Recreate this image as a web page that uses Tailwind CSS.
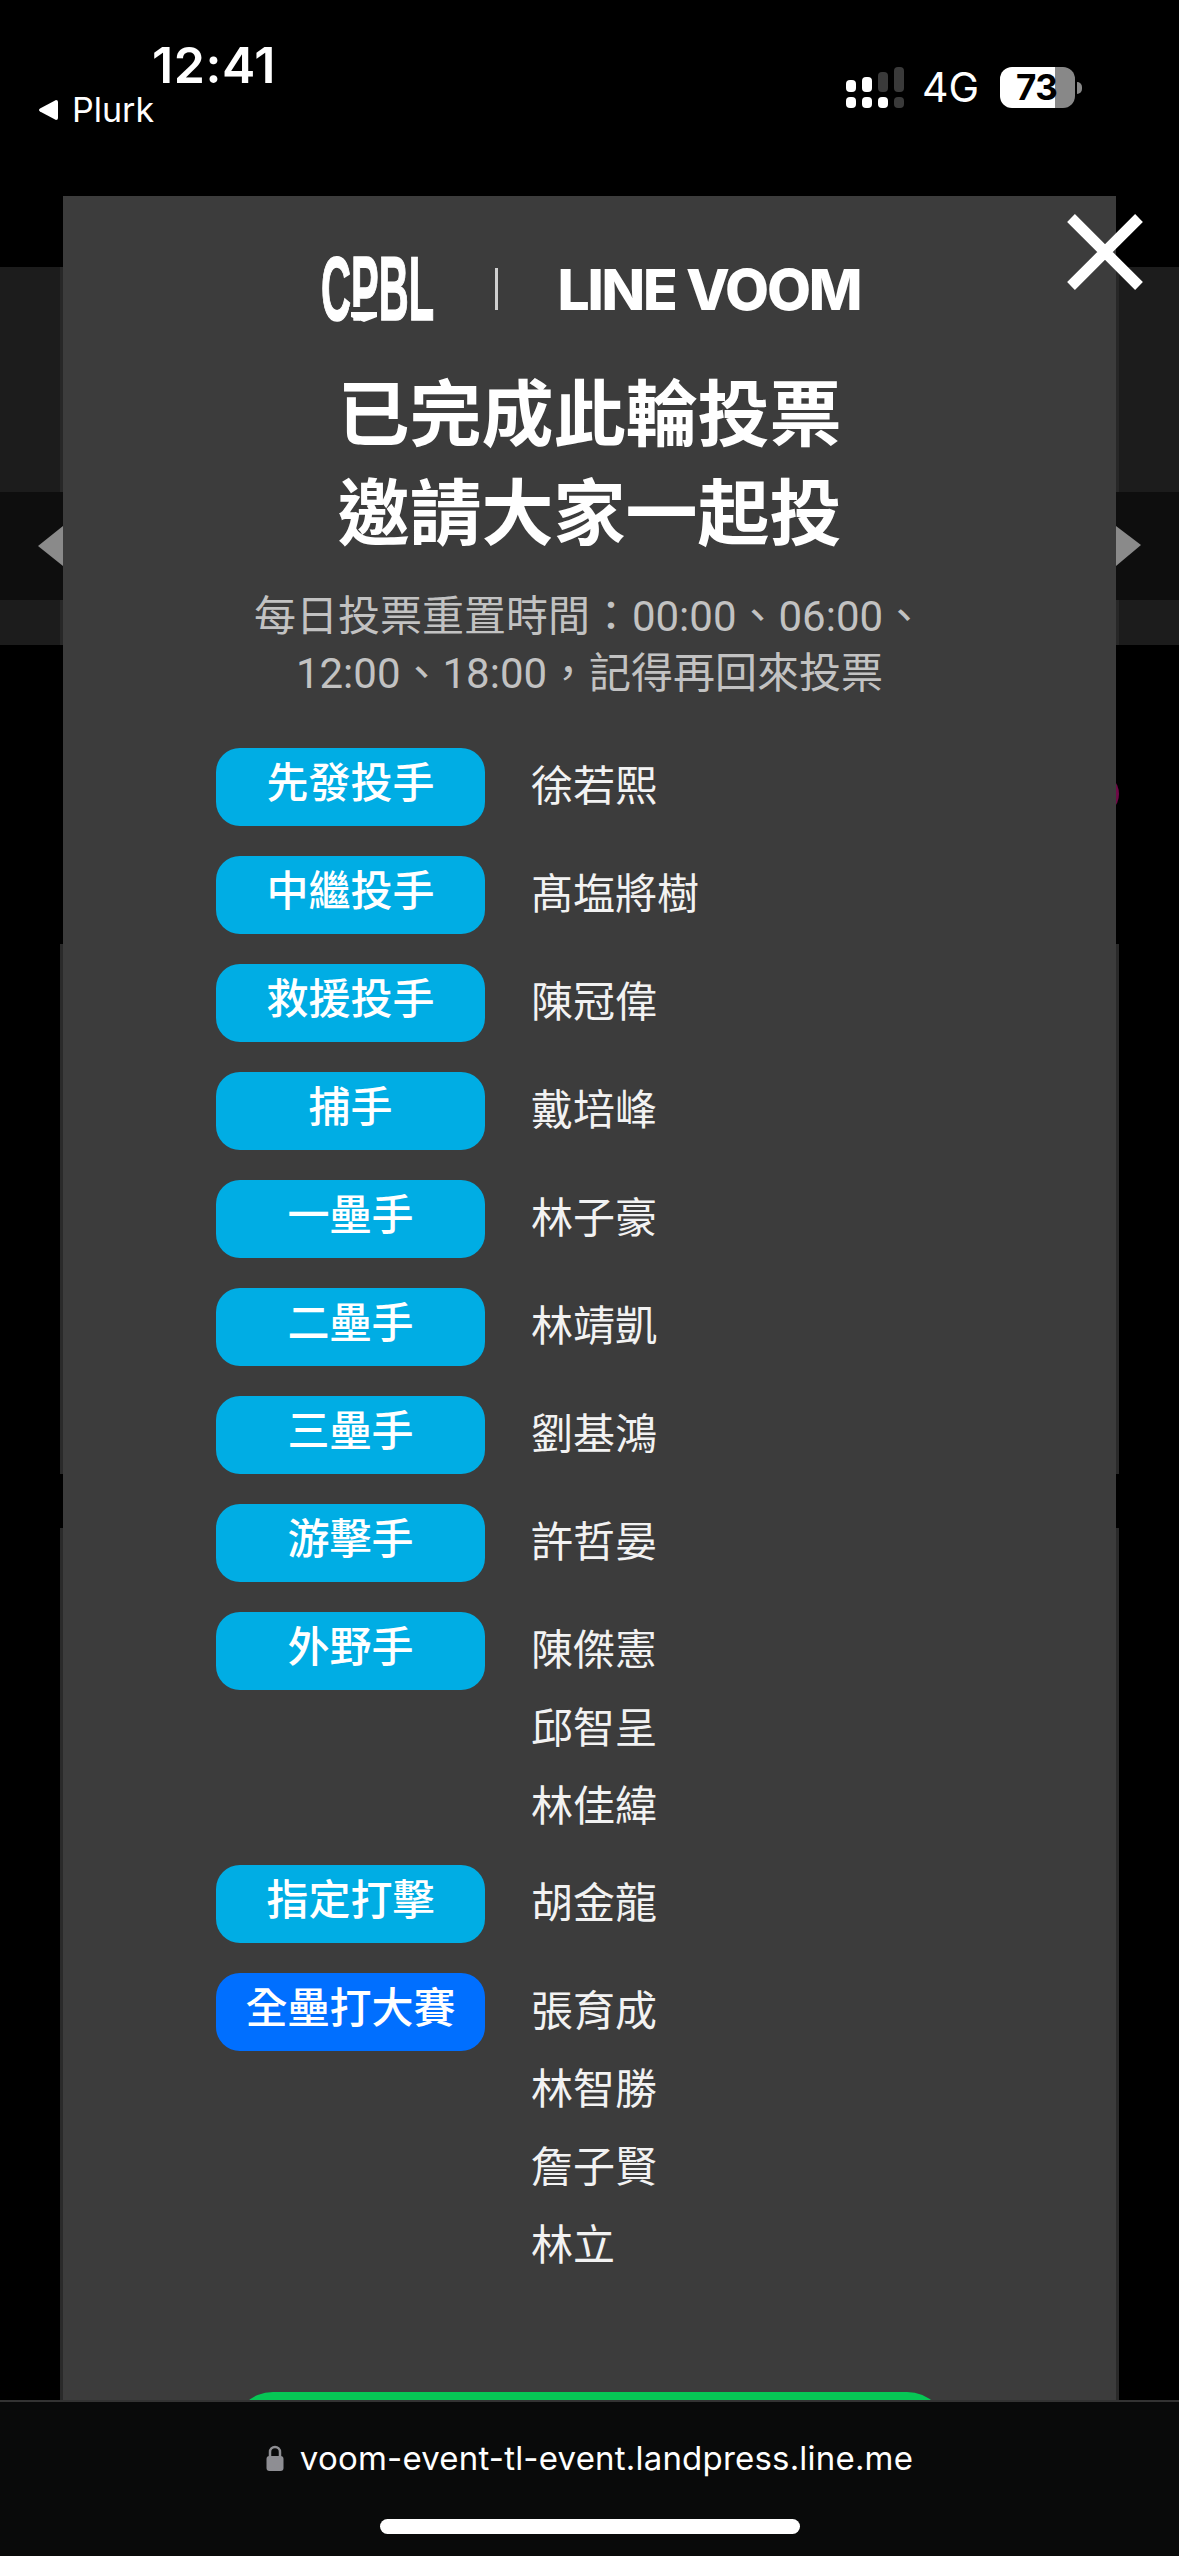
<!DOCTYPE html>
<html lang="zh-Hant">
<head>
<meta charset="utf-8">
<script src="https://cdn.jsdelivr.net/npm/@tailwindcss/browser@4"></script>
<title>投票</title>
</head>
<body class="bg-black">
<div class="relative w-[1179px] h-[2556px] overflow-hidden bg-black font-['Roboto','Noto_Sans_CJK_TC',sans-serif]">

  <!-- page dimmed behind the modal -->
  <div class="flex flex-col pt-[267px] h-full">
    <div class="h-[225px] bg-[#1c1c1c]"><div class="h-full mx-[60px] bg-white/5"></div></div>
    <div class="h-[108px] bg-[#0e0e0e]"></div>
    <div class="h-[45px] bg-[#1c1c1c]"><div class="h-full mx-[60px] bg-white/5"></div></div>
    <div class="h-[299px]"></div>
    <div class="h-[530px] mx-[60px] bg-[#2a2a2a]"></div>
    <div class="h-[54px]"></div>
    <div class="flex-1 mx-[60px] bg-[#2a2a2a]"></div>
  </div>
  <div class="absolute left-[1075px] top-[772px] w-[44px] h-[44px] rounded-full bg-[#6e0a46]"></div>
  <svg class="absolute left-[36px] top-[524px]" width="30" height="44" viewBox="0 0 30 44"><polygon points="2,22 27,2 27,42" fill="#8a8a8a"/></svg>
  <svg class="absolute left-[1113px] top-[524px]" width="30" height="44" viewBox="0 0 30 44"><polygon points="3,2 28,21 3,42" fill="#8a8a8a"/></svg>

  <!-- modal -->
  <div class="absolute left-[63px] top-[196px] bottom-0 w-[1053px] bg-[#3c3c3c] flex flex-col items-center pt-[60px]">
    <div class="flex items-center h-[66px] w-[538px]">
      <svg class="shrink-0 overflow-visible" width="114" height="68" viewBox="0 0 114 68">
        <text x="0" y="65" font-family="Liberation Sans" font-weight="700" font-size="90" fill="#ffffff" stroke="#ffffff" stroke-width="1.5" textLength="113" lengthAdjust="spacingAndGlyphs">CPBL</text>
        <rect x="28" y="52" width="30" height="6" fill="#3c3c3c"/>
        <polygon points="30,57 56,57 56,62 43,67 30,62" fill="#ffffff"/>
      </svg>
      <div class="shrink-0 ml-[60px] w-[3px] h-[42px] bg-[#cfcfcf]"></div>
      <div class="shrink-0 ml-[60px] font-['Inter',sans-serif] font-extrabold text-[57px] leading-none tracking-[-2.2px] text-white whitespace-nowrap">LINE VOOM</div>
    </div>
    <h1 class="mt-[44px] text-center text-[72px] leading-[99px] font-bold text-white">已完成此輪投票<br>邀請大家一起投</h1>
    <p class="mt-[24px] text-center text-[42px] leading-[57px] text-[#c2c2c2]">每日投票重置時間：00:00、06:00、<br>12:00、18:00，記得再回來投票</p>

    <div class="mt-[46px] self-start ml-[153px] flex flex-col text-[42px]">
      <div class="flex items-start">
        <div class="w-[269px] h-[78px] mb-[30px] pb-[8px] rounded-[24px] bg-[#00ade4] flex items-center justify-center font-medium text-white">先發投手</div>
        <div class="ml-[46px] pb-[19px] leading-[78px] text-[#f2f2f2]">徐若熙</div>
      </div>
      <div class="flex items-start">
        <div class="w-[269px] h-[78px] mb-[30px] pb-[8px] rounded-[24px] bg-[#00ade4] flex items-center justify-center font-medium text-white">中繼投手</div>
        <div class="ml-[46px] pb-[19px] leading-[78px] text-[#f2f2f2]">髙塩將樹</div>
      </div>
      <div class="flex items-start">
        <div class="w-[269px] h-[78px] mb-[30px] pb-[8px] rounded-[24px] bg-[#00ade4] flex items-center justify-center font-medium text-white">救援投手</div>
        <div class="ml-[46px] pb-[19px] leading-[78px] text-[#f2f2f2]">陳冠偉</div>
      </div>
      <div class="flex items-start">
        <div class="w-[269px] h-[78px] mb-[30px] pb-[8px] rounded-[24px] bg-[#00ade4] flex items-center justify-center font-medium text-white">捕手</div>
        <div class="ml-[46px] pb-[19px] leading-[78px] text-[#f2f2f2]">戴培峰</div>
      </div>
      <div class="flex items-start">
        <div class="w-[269px] h-[78px] mb-[30px] pb-[8px] rounded-[24px] bg-[#00ade4] flex items-center justify-center font-medium text-white">一壘手</div>
        <div class="ml-[46px] pb-[19px] leading-[78px] text-[#f2f2f2]">林子豪</div>
      </div>
      <div class="flex items-start">
        <div class="w-[269px] h-[78px] mb-[30px] pb-[8px] rounded-[24px] bg-[#00ade4] flex items-center justify-center font-medium text-white">二壘手</div>
        <div class="ml-[46px] pb-[19px] leading-[78px] text-[#f2f2f2]">林靖凱</div>
      </div>
      <div class="flex items-start">
        <div class="w-[269px] h-[78px] mb-[30px] pb-[8px] rounded-[24px] bg-[#00ade4] flex items-center justify-center font-medium text-white">三壘手</div>
        <div class="ml-[46px] pb-[19px] leading-[78px] text-[#f2f2f2]">劉基鴻</div>
      </div>
      <div class="flex items-start">
        <div class="w-[269px] h-[78px] mb-[30px] pb-[8px] rounded-[24px] bg-[#00ade4] flex items-center justify-center font-medium text-white">游擊手</div>
        <div class="ml-[46px] pb-[19px] leading-[78px] text-[#f2f2f2]">許哲晏</div>
      </div>
      <div class="flex items-start">
        <div class="w-[269px] h-[78px] mb-[30px] pb-[8px] rounded-[24px] bg-[#00ade4] flex items-center justify-center font-medium text-white">外野手</div>
        <div class="ml-[46px] pb-[19px] leading-[78px] text-[#f2f2f2]">陳傑憲<br>邱智呈<br>林佳緯</div>
      </div>
      <div class="flex items-start">
        <div class="w-[269px] h-[78px] mb-[30px] pb-[8px] rounded-[24px] bg-[#00ade4] flex items-center justify-center font-medium text-white">指定打擊</div>
        <div class="ml-[46px] pb-[19px] leading-[78px] text-[#f2f2f2]">胡金龍</div>
      </div>
      <div class="flex items-start">
        <div class="w-[269px] h-[78px] mb-[30px] pb-[8px] rounded-[24px] bg-[#006fff] flex items-center justify-center font-medium text-white">全壘打大賽</div>
        <div class="ml-[46px] pb-[19px] leading-[78px] text-[#f2f2f2]">張育成<br>林智勝<br>詹子賢<br>林立</div>
      </div>
    </div>
    <div class="mt-[88px] w-[714px] h-[90px] shrink-0 rounded-[40px] bg-[#06c755]"></div>
  </div>

  <!-- close -->
  <svg class="absolute left-[1064px] top-[211px]" width="82" height="82" viewBox="0 0 82 82" aria-label="close"><path d="M7 7 L75 75 M75 7 L7 75" stroke="#ffffff" stroke-width="11" fill="none" stroke-linecap="butt"/></svg>

  <!-- iOS status bar -->
  <div class="absolute left-[152px] top-[36px] font-['Inter',sans-serif] font-semibold text-[50px] leading-[58px] tracking-[0.6px] text-white">12:41</div>
  <div class="absolute left-[38px] top-[90px] flex items-center gap-[14px] font-['Inter',sans-serif] text-[34px] leading-[40px] text-white">
    <svg width="20" height="22" viewBox="0 0 20 22"><path d="M18 1 Q20 1 20 3 V19 Q20 21 18 21 L2 12.5 Q0 11 2 9.5 Z" fill="#ffffff"/></svg>
    <span>Plurk</span>
  </div>
  <div class="absolute left-[846px] top-[67px] flex items-center">
    <svg width="58" height="41" viewBox="0 0 58 41">
      <rect x="0" y="13" width="10" height="12" rx="4" fill="#fff"/><rect x="16" y="10" width="10" height="15" rx="4" fill="#fff"/><rect x="32" y="5" width="10" height="20" rx="4" fill="#3a3a3a"/><rect x="48" y="0" width="10" height="25" rx="4" fill="#3a3a3a"/>
      <rect x="0" y="30" width="10" height="11" rx="4" fill="#fff"/><rect x="16" y="30" width="10" height="11" rx="4" fill="#fff"/><rect x="32" y="30" width="10" height="11" rx="4" fill="#fff"/><rect x="48" y="30" width="10" height="11" rx="4" fill="#3a3a3a"/>
    </svg>
    <span class="ml-[18px] font-['Inter',sans-serif] text-[41px] leading-[41px] text-white">4G</span>
    <div class="ml-[21px] relative w-[75px] h-[41px] rounded-[12px] overflow-hidden bg-[linear-gradient(90deg,#ffffff_0,#ffffff_55px,#888888_55px)] flex items-center pl-[16px] font-['Inter',sans-serif] font-bold text-[35px] tracking-[-0.5px] text-black">73</div>
    <div class="ml-[2px] w-[5px] h-[12px] rounded-r-full bg-[#888888]"></div>
  </div>

  <!-- Safari address bar -->
  <div class="absolute left-0 right-0 bottom-0 h-[156px] bg-[#090a0a] border-t-2 border-[#333333] flex flex-col items-center">
    <div class="mt-[36px] flex items-center gap-[16px] h-[40px]">
      <svg width="18" height="26" viewBox="0 0 18 26"><path d="M4 12 V7 a5 5 0 0 1 10 0 V12" fill="none" stroke="#8e8e93" stroke-width="2.5"/><rect x="0.500" y="11" width="17" height="15" rx="3" fill="#8e8e93"/></svg>
      <span class="font-['Inter',sans-serif] text-[33px] leading-[40px] tracking-[0.2px] text-white whitespace-nowrap">voom-event-tl-event.landpress.line.me</span>
    </div>
    <div class="mt-[41px] w-[420px] h-[15px] rounded-full bg-white"></div>
  </div>
</div>
</body>
</html>
